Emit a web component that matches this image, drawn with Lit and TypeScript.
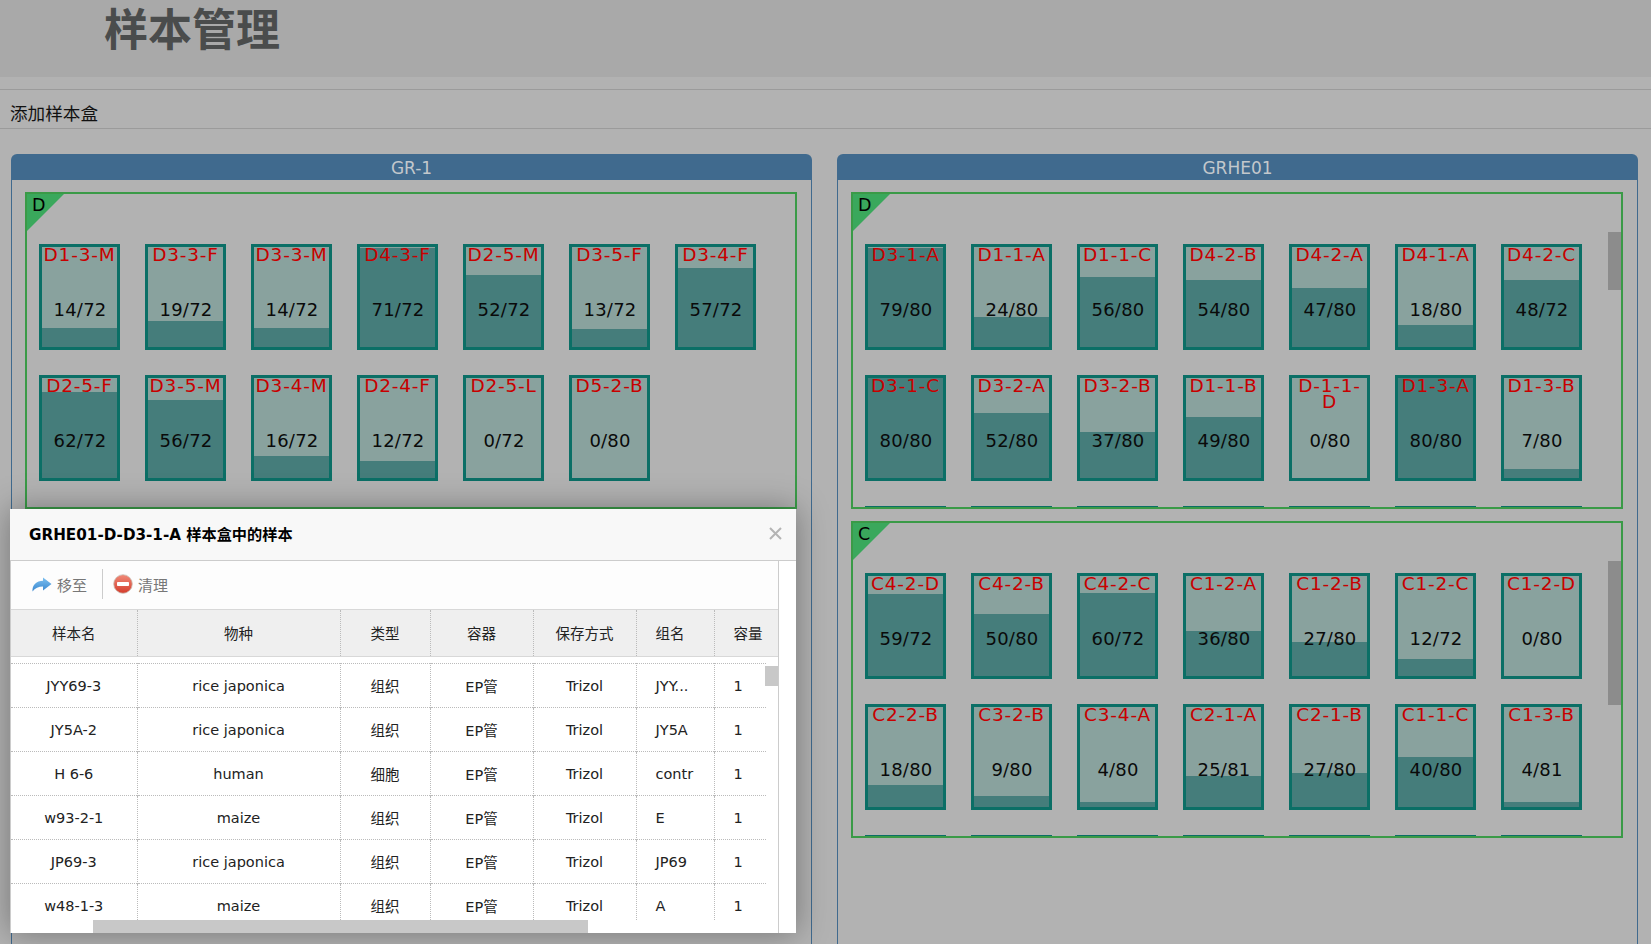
import { LitElement, html, css, svg } from "lit";
import { customElement } from "lit/decorators.js";

type Box = [string, number, number];

// only the top edge of the third row shows above the clipped group
const clipped: Box[] = Array.from({ length: 7 }, (): Box => ["", 0, 0]);

const leftD: Box[] = [
  ["D1-3-M", 14, 72], ["D3-3-F", 19, 72], ["D3-3-M", 14, 72], ["D4-3-F", 71, 72], ["D2-5-M", 52, 72], ["D3-5-F", 13, 72], ["D3-4-F", 57, 72],
  ["D2-5-F", 62, 72], ["D3-5-M", 56, 72], ["D3-4-M", 16, 72], ["D2-4-F", 12, 72], ["D2-5-L", 0, 72], ["D5-2-B", 0, 80],
];
const rightD: Box[] = [
  ["D3-1-A", 79, 80], ["D1-1-A", 24, 80], ["D1-1-C", 56, 80], ["D4-2-B", 54, 80], ["D4-2-A", 47, 80], ["D4-1-A", 18, 80], ["D4-2-C", 48, 72],
  ["D3-1-C", 80, 80], ["D3-2-A", 52, 80], ["D3-2-B", 37, 80], ["D1-1-B", 49, 80], ["D-1-1-D", 0, 80], ["D1-3-A", 80, 80], ["D1-3-B", 7, 80],
  ...clipped,
];
const rightC: Box[] = [
  ["C4-2-D", 59, 72], ["C4-2-B", 50, 80], ["C4-2-C", 60, 72], ["C1-2-A", 36, 80], ["C1-2-B", 27, 80], ["C1-2-C", 12, 72], ["C1-2-D", 0, 80],
  ["C2-2-B", 18, 80], ["C3-2-B", 9, 80], ["C3-4-A", 4, 80], ["C2-1-A", 25, 81], ["C2-1-B", 27, 80], ["C1-1-C", 40, 80], ["C1-3-B", 4, 81],
  ...clipped,
];

const heads = ["样本名", "物种", "类型", "容器", "保存方式", "组名", "容量"];
const rows = [
  ["JYY69-3", "rice japonica", "组织", "EP管", "Trizol", "JYY...", "1"],
  ["JY5A-2", "rice japonica", "组织", "EP管", "Trizol", "JY5A", "1"],
  ["H 6-6", "human", "细胞", "EP管", "Trizol", "contr", "1"],
  ["w93-2-1", "maize", "组织", "EP管", "Trizol", "E", "1"],
  ["JP69-3", "rice japonica", "组织", "EP管", "Trizol", "JP69", "1"],
  ["w48-1-3", "maize", "组织", "EP管", "Trizol", "A", "1"],
];
const colWidths = [126, 203, 90, 103, 103, 78, 52];

const arrowIcon = svg`<defs><linearGradient id="ar" x1="0" y1="0" x2="0" y2="1"><stop offset="0" stop-color="#7cc0f0"/><stop offset="1" stop-color="#3a87cf"/></linearGradient></defs>
<path d="M0.500 14.500C0 8 4.500 4 11 3.800V0.500L19.500 7L11 13.500V9.500C6.500 9.500 3 11 0.500 14.500Z" fill="url(#ar)"/>`;
const stopIcon = svg`<defs><linearGradient id="st" x1="0" y1="0" x2="0" y2="1"><stop offset="0" stop-color="#f08a78"/><stop offset="1" stop-color="#d43c2c"/></linearGradient></defs>
<circle cx="10" cy="10" r="9.300" fill="url(#st)" stroke="#c9c0b8" stroke-width="0.800"/><rect x="4" y="8" width="12" height="4" rx="0.800" fill="#fff"/>`;

@customElement("app-root")
export class AppRoot extends LitElement {
  static styles = css`
    :host {
      display: block;
      height: 944px;
      overflow: hidden;
      position: relative;
      background: #b2b2b2;
      font-family: "DejaVu Sans", "Noto Sans CJK SC", sans-serif;
      color: #000;
    }
    .top {
      height: 77px;
      background: #a9a9a9;
      padding-left: 104px;
      box-sizing: border-box;
    }
    h1 {
      margin: 0;
      font-size: 44px;
      line-height: 54px;
      font-weight: 700;
      color: #4a4c4c;
      font-family: "Noto Sans CJK SC", sans-serif;
    }
    .add {
      margin-top: 12px;
      height: 40px;
      box-sizing: border-box;
      border-top: 1px solid #9b9b9b;
      border-bottom: 1px solid #9b9b9b;
      padding: 9px 0 0 10px;
      font: 17.600px/27px "Noto Sans CJK SC", sans-serif;
      color: #111;
    }
    .panels {
      display: grid;
      grid-template-columns: 801px 801px;
      gap: 25px;
      padding: 25px 0 0 11px;
    }
    .panel-title {
      height: 26px;
      background: #406a8e;
      border-radius: 6px 6px 0 0;
      color: #c3c8cc;
      text-align: center;
      font-size: 17px;
      line-height: 28px;
    }
    .panel-body {
      border: 1px solid #406a8e;
      border-top: 0;
      height: 800px;
      padding: 12px 13px 0 13px;
      display: flex;
      flex-direction: column;
      gap: 12px;
    }
    .group {
      position: relative;
      width: 772px;
      height: 317px;
      box-sizing: border-box;
      border: 2px solid #3a9a47;
      overflow: hidden;
    }
    .corner {
      position: absolute;
      left: 0;
      top: 0;
      width: 37px;
      height: 37px;
      background: #3aa85c;
      clip-path: polygon(0 0, 100% 0, 0 100%);
    }
    .corner span {
      position: absolute;
      left: 5px;
      top: 1px;
      font-size: 17.500px;
      line-height: 20px;
    }
    .thumb {
      position: absolute;
      right: 0;
      width: 13px;
      background: #8c8c8c;
    }
    .cards {
      display: flex;
      flex-wrap: wrap;
      gap: 25px;
      padding: 50px 0 0 12px;
    }
    .card {
      position: relative;
      width: 81px;
      height: 106px;
      box-sizing: border-box;
      border: 3px solid #0b6f66;
      background: #89a29e;
      text-align: center;
    }
    .fill {
      position: absolute;
      left: 0;
      right: 0;
      bottom: 0;
      background: #457d7b;
    }
    .label {
      position: relative;
      color: #c80000;
      font-size: 18.500px;
      line-height: 16px;
      letter-spacing: 0.800px;
    }
    .count {
      position: absolute;
      left: 1px;
      right: 0;
      top: 52px;
      font-size: 18px;
      line-height: 22px;
      letter-spacing: 0.200px;
      color: #0a0a0a;
    }
    .modal {
      position: absolute;
      left: 10px;
      top: 509px;
      width: 786px;
      height: 424px;
      background: #fff;
      box-shadow: 0 0 30px rgba(0, 0, 0, 0.35);
      display: flex;
      flex-direction: column;
      overflow: hidden;
    }
    .modal-head {
      height: 52px;
      flex: none;
      box-sizing: border-box;
      background: #f8f8f8;
      border-bottom: 1px solid #ccc;
      padding: 0 0 4px 19px;
      display: flex;
      align-items: center;
      justify-content: space-between;
      font-size: 15.200px;
      font-weight: 700;
    }
    .close {
      margin: 2px 14px 0 0;
      width: 13px;
      height: 13px;
    }
    .modal-main {
      width: 769px;
      flex: 1;
      min-height: 0;
      box-sizing: border-box;
      border-left: 1px solid #ccc;
      border-right: 1px solid #ccc;
      display: flex;
      flex-direction: column;
      position: relative;
    }
    .tools {
      height: 48px;
      flex: none;
      box-sizing: border-box;
      background: #fdfdfd;
      display: flex;
      align-items: center;
      padding: 0 0 2px 21px;
      color: #777;
      font: 15px "Noto Sans CJK SC", sans-serif;
    }
    .tool {
      display: flex;
      align-items: center;
      gap: 5px;
    }
    .sep {
      width: 1px;
      height: 30px;
      background: #ccc;
      margin: 0 10px 0 15px;
    }
    table {
      table-layout: fixed;
      border-collapse: collapse;
      font-size: 14.500px;
      color: #222;
    }
    td, th {
      padding: 0;
      text-align: center;
      font-weight: 400;
      white-space: nowrap;
      overflow: hidden;
      border-right: 1px dotted #bbb;
    }
    td:last-child, th:last-child {
      border-right: 0;
    }
    .thead {
      flex: none;
      background: #efefef;
      border-top: 1px solid #d8d8d8;
      border-bottom: 1px solid #d8d8d8;
      height: 48px;
      box-sizing: border-box;
    }
    .thead table {
      width: 755px;
    }
    .thead th {
      height: 44px;
      padding-bottom: 2px;
    }
    .tbody {
      flex: 1;
      min-height: 0;
      overflow: hidden;
      padding-top: 6px;
      position: relative;
    }
    .tbody table {
      width: 755px;
    }
    .tbody tr {
      border-top: 1px dotted #bbb;
      height: 44px;
    }
    .tbody td {
      height: 43px;
    }
    td.start, th.start {
      text-align: left;
      padding-left: 19px;
    }
    .vthumb {
      position: absolute;
      right: 0;
      top: 9px;
      width: 13px;
      height: 20px;
      background: #c8c8c8;
    }
    .hbar {
      flex: none;
      height: 13px;
      position: relative;
    }
    .hthumb {
      position: absolute;
      left: 82px;
      width: 495px;
      top: 0;
      bottom: 0;
      background: #c8c8c8;
    }
  `;

  private group(name: string, boxes: Box[], thumb?: [number, number]) {
    return html`
      <div class="group">
        <div class="cards">
          ${boxes.map(([label, used, cap]) => html`
            <div class="card">
              ${cap ? html`
                <div class="fill" style="height:${(used / cap) * 100}%"></div>
                <div class="label">${label}</div>
                <div class="count">${used}/${cap}</div>
              ` : ""}
            </div>
          `)}
        </div>
        <div class="corner"><span>${name}</span></div>
        ${thumb ? html`<div class="thumb" style="top:${thumb[0]}px;height:${thumb[1]}px"></div>` : ""}
      </div>
    `;
  }

  private colgroup() {
    return html`<colgroup>${colWidths.map((w) => html`<col style="width:${w}px" />`)}</colgroup>`;
  }

  render() {
    return html`
      <div class="top"><h1>样本管理</h1></div>
      <div class="add">添加样本盒</div>
      <div class="panels">
        <section>
          <div class="panel-title">GR-1</div>
          <div class="panel-body">${this.group("D", leftD)}</div>
        </section>
        <section>
          <div class="panel-title">GRHE01</div>
          <div class="panel-body">
            ${this.group("D", rightD, [38, 58])}
            ${this.group("C", rightC, [38, 144])}
          </div>
        </section>
      </div>
      <div class="modal">
        <div class="modal-head">
          <span>GRHE01-D-D3-1-A 样本盒中的样本</span>
          <svg class="close" viewBox="0 0 13 13"><path d="M1 1L12 12M12 1L1 12" stroke="#b4b4b4" stroke-width="2" fill="none"/></svg>
        </div>
        <div class="modal-main">
          <div class="tools">
            <span class="tool"><svg width="20" height="15" viewBox="0 0 20 15">${arrowIcon}</svg>移至</span>
            <span class="sep"></span>
            <span class="tool"><svg width="20" height="20" viewBox="0 0 20 20">${stopIcon}</svg>清理</span>
          </div>
          <div class="thead">
            <table>
              ${this.colgroup()}
              <tr>${heads.map((h, i) => html`<th class=${i >= 5 ? "start" : ""}>${h}</th>`)}</tr>
            </table>
          </div>
          <div class="tbody">
            <table>
              ${this.colgroup()}
              ${rows.map((r) => html`
                <tr>${r.map((c, i) => html`<td class=${i >= 5 ? "start" : ""}>${c}</td>`)}</tr>
              `)}
            </table>
            <div class="vthumb"></div>
          </div>
          <div class="hbar"><div class="hthumb"></div></div>
        </div>
      </div>
    `;
  }
}
